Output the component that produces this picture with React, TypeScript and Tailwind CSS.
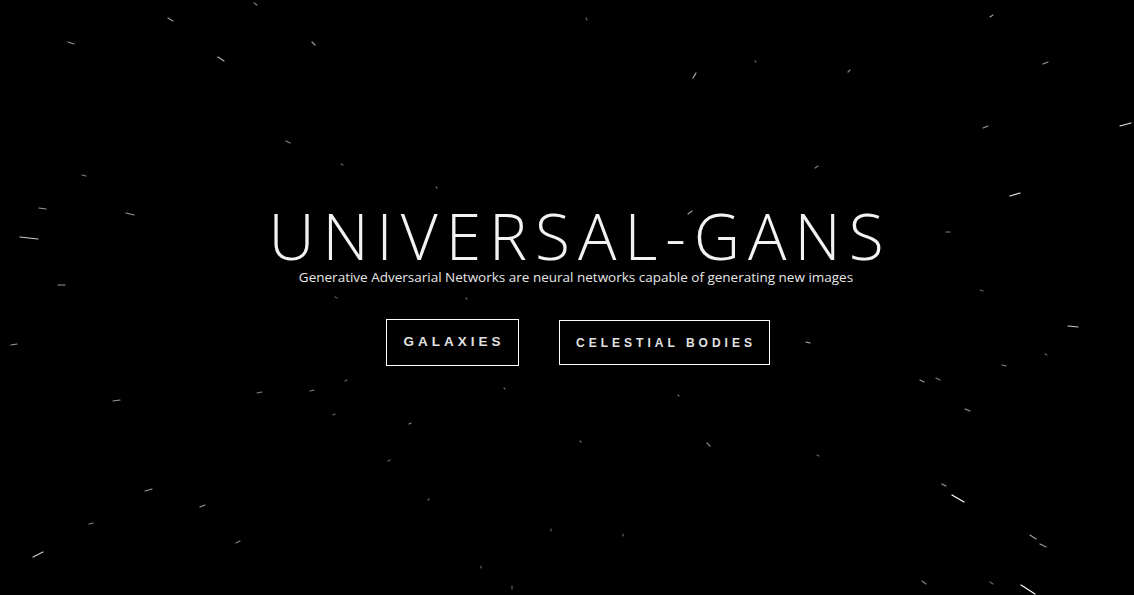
const stars: [number, number, number, number, number][] = [
  [68, 42, 74, 44, 0.6],
  [168, 18, 173, 21, 0.6],
  [218, 57, 224, 61, 0.7],
  [254, 3, 257, 5, 0.5],
  [312, 42, 315, 45, 0.6],
  [586, 18, 587, 20, 0.4],
  [693, 78, 696, 73, 0.7],
  [755, 61, 756, 62, 0.4],
  [848, 72, 850, 70, 0.5],
  [990, 17, 993, 15, 0.6],
  [1043, 64, 1048, 62, 0.6],
  [1120, 126, 1131, 123, 0.9],
  [983, 128, 988, 126, 0.6],
  [1010, 196, 1020, 193, 0.9],
  [815, 168, 818, 166, 0.5],
  [286, 141, 290, 143, 0.5],
  [341, 164, 343, 165, 0.4],
  [82, 175, 86, 176, 0.5],
  [436, 187, 437, 188, 0.4],
  [39, 208, 46, 209, 0.6],
  [126, 213, 134, 215, 0.6],
  [20, 237, 38, 239, 0.8],
  [946, 232, 950, 232, 0.5],
  [688, 214, 692, 211, 0.6],
  [58, 285, 65, 285, 0.6],
  [466, 298, 467, 299, 0.4],
  [335, 297, 337, 298, 0.4],
  [1068, 326, 1078, 327, 0.8],
  [11, 345, 17, 344, 0.6],
  [980, 290, 983, 291, 0.4],
  [806, 342, 810, 343, 0.7],
  [1002, 365, 1006, 366, 0.5],
  [1045, 354, 1047, 355, 0.4],
  [920, 380, 924, 382, 0.6],
  [936, 378, 940, 380, 0.5],
  [965, 409, 970, 411, 0.6],
  [345, 381, 347, 380, 0.4],
  [310, 391, 314, 390, 0.5],
  [257, 393, 262, 392, 0.5],
  [113, 401, 120, 400, 0.6],
  [409, 424, 411, 423, 0.5],
  [333, 415, 335, 414, 0.4],
  [580, 441, 581, 442, 0.4],
  [707, 443, 710, 446, 0.5],
  [504, 388, 505, 389, 0.4],
  [678, 395, 679, 396, 0.4],
  [388, 461, 390, 460, 0.4],
  [817, 455, 819, 456, 0.4],
  [145, 491, 152, 489, 0.6],
  [200, 507, 205, 505, 0.6],
  [89, 524, 93, 523, 0.5],
  [428, 500, 429, 499, 0.4],
  [942, 484, 946, 486, 0.6],
  [952, 495, 964, 502, 1],
  [1030, 535, 1036, 539, 0.6],
  [1040, 544, 1046, 547, 0.6],
  [236, 543, 240, 541, 0.5],
  [33, 557, 43, 552, 0.8],
  [551, 529, 551, 531, 0.4],
  [623, 534, 623, 536, 0.4],
  [481, 566, 481, 568, 0.4],
  [512, 586, 512, 589, 0.4],
  [922, 581, 926, 584, 0.5],
  [1021, 585, 1035, 594, 1],
  [990, 582, 993, 584, 0.4],
];

const StarField = () => (
  <svg
    className="absolute inset-0"
    width={1134}
    height={595}
    viewBox="0 0 1134 595"
    fill="none"
  >
    {stars.map(([x1, y1, x2, y2, o], i) => (
      <line
        key={i}
        x1={x1}
        y1={y1}
        x2={x2}
        y2={y2}
        stroke="#fff"
        strokeOpacity={o}
        strokeWidth={1.2}
        strokeLinecap="round"
      />
    ))}
  </svg>
);

export default function App() {
  return (
    <div className="relative w-full h-[595px] overflow-hidden bg-black">
      <StarField />
      {/* Hero */}
      <div className="relative flex flex-col items-center pt-[205px] pl-[18px]">
        <h1 className="font-['Open_Sans',sans-serif] font-light text-[64px] leading-[62px] tracking-[8px] text-[#f2f2f2] pl-[8px]">
          UNIVERSAL-GANS
        </h1>
        <p className="font-['Open_Sans',sans-serif] text-[13.5px] leading-[18px] text-[#e6e6e6] mt-[1px]">
          Generative Adversarial Networks are neural networks capable of
          generating new images
        </p>
        <div className="flex items-center gap-[40px] mt-[33px] pl-[3px]">
          <button className="h-[47px] w-[133px] border border-white font-['Liberation_Sans',sans-serif] font-bold text-[13.5px] tracking-[4px] pl-[4px] text-[#e0e0e0]">
            GALAXIES
          </button>
          <button className="h-[45px] w-[211px] border border-white font-['Liberation_Sans',sans-serif] font-bold text-[12px] tracking-[4px] pl-[4px] text-[#e0e0e0]">
            CELESTIAL BODIES
          </button>
        </div>
      </div>
    </div>
  );
}
